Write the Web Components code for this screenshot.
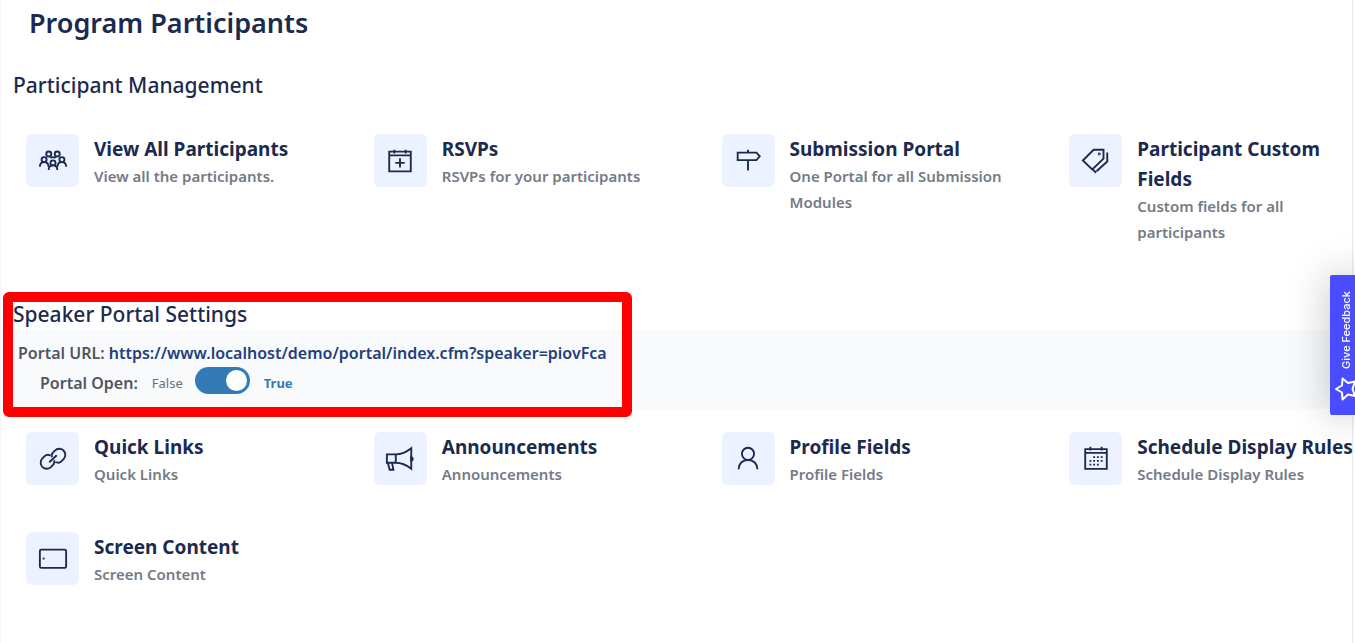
<!DOCTYPE html>
<html lang="en">
<head>
<meta charset="utf-8">
<meta name="viewport" content="width=device-width, initial-scale=1">
<title>Program Participants</title>
<style>
    :root {
        --ink: #1b2a4e;
        --muted: #747b86;
        --label: #50575f;
        --link: #22407a;
        --tile: #ecf2ff;
        --band: #f9fafc;
        --line: #e9ebf2;
        --blue: #337ab7;
    }

    body {
        margin: 0;
        background: #ffffff;
        color: var(--ink);
        font-family: "Noto Sans", "Open Sans", sans-serif;
        overflow-x: hidden;
    }
</style>
</head>
<body>
<program-page></program-page>

<script>
const ICONS = {
    group: `
        <circle cx="11.500" cy="8.500" r="2.700"/>
        <circle cx="20.500" cy="8.500" r="2.700"/>
        <circle cx="6.500" cy="14.500" r="2.700"/>
        <circle cx="25.500" cy="14.500" r="2.700"/>
        <circle cx="16" cy="18" r="2.700"/>
        <path d="M2 22c0-3 1.700-4.800 4.600-4.800S11.200 19 11.200 22M20.800 22c0-3 1.700-4.800 4.600-4.800S30 19 30 22M11.400 25.500c0-3 1.800-4.800 4.600-4.800s4.600 1.800 4.600 4.800M13.200 13c1.300-1.600 4.300-1.600 5.600 0"/>`,
    calendarPlus: `
        <path d="M4.500 6h23v21h-23zM4.500 10h23M10 4v4M22 4v4M16 13v10M11 18h10"/>`,
    signpost: `
        <path d="M5 7h20l3.500 4-3.500 4H5zM16 4v3M16 16v10"/>`,
    tags: `
        <path d="M2 15.500L13.500 4H24v9.500L12 25zM28 7v9.500L16.500 27M13 25.500l3 3"/>
        <circle cx="19.500" cy="8.500" r=".5"/>`,
    link: `
        <path d="M14.800 14.200c-.6-1.800-.2-3.600 1.200-5l2-2.200a6.500 6.500 0 0 1 9.300 9.100l-2.400 2.400c-1.600 1.500-4.200 1.700-6.100.7M17.200 17.300c.6 1.800.2 3.600-1.200 5l-2 2.200a6.500 6.500 0 0 1-9.300-9.100l2.400-2.400c1.600-1.500 4.200-1.700 6.100-.7M12 19.500l8-7.500"/>`,
    megaphone: `
        <path d="M2 11h9.500C18 11 23 8.500 28 4.500v22C23 22.500 18 20 11.500 20H2zM11.500 11v9M3 20l2 7.500h4L7.500 20"/>
        <path d="M28 14c2.200.5 2.200 3.500 0 4z" fill="currentColor"/>`,
    person: `
        <circle cx="16" cy="10.500" r="6.500"/>
        <path d="M6 27c0-6 4-10 10-10s10 4 10 10"/>`,
    calendarDays: `
        <path d="M4.500 5.500h23v21h-23zM4.500 9.500h23M10 3v4M22 3v4"/>
        <path stroke-dasharray="2 2" d="M13 14h12M9 18h15M9 22h12"/>`,
    tablet: `
        <rect x="2" y="6" width="28" height="19.500" rx="1.500"/>
        <path d="M5 15.500h2"/>`
};

class FeatureCard extends HTMLElement {
    connectedCallback() {
        this.attachShadow({ mode: 'open' });
        this.shadowRoot.innerHTML = `
            <style>
                :host {
                    display: block;
                    min-width: 0;
                }

                a {
                    display: flex;
                    align-items: flex-start;
                    gap: 15px;
                    color: inherit;
                    text-decoration: none;
                }

                .tile {
                    flex: none;
                    display: flex;
                    align-items: center;
                    justify-content: center;
                    width: 53px;
                    height: 53px;
                    border-radius: 6px;
                    background: var(--tile);
                }

                svg {
                    width: 30px;
                    height: 30px;
                    fill: none;
                    stroke: currentColor;
                    stroke-width: 2;
                }

                .title {
                    display: block;
                    font-size: 19px;
                    font-weight: 700;
                    line-height: 30px;
                }

                .description {
                    display: block;
                    margin-top: -1px;
                    color: var(--muted);
                    font-size: 15px;
                    font-weight: 600;
                    line-height: 26px;
                }
            </style>
            <a href="#">
                <span class="tile"><svg viewBox="0 0 32 32" aria-hidden="true">${ICONS[this.getAttribute('icon')]}</svg></span>
                <span>
                    <span class="title"><slot name="title"></slot></span>
                    <span class="description"><slot></slot></span>
                </span>
            </a>
        `;
    }
}

class CardGrid extends HTMLElement {
    connectedCallback() {
        this.attachShadow({ mode: 'open' });
        this.shadowRoot.innerHTML = `
            <style>
                :host {
                    display: grid;
                    grid-template-columns: repeat(4, minmax(0, 1fr));
                    gap: 45px 60px;
                    margin-right: -5px;
                    padding-left: 25px;
                }

                @media (max-width: 1100px) {
                    :host {
                        grid-template-columns: repeat(2, minmax(0, 1fr));
                    }
                }
            </style>
            <slot></slot>
        `;
    }
}

class ToggleSwitch extends HTMLElement {
    connectedCallback() {
        this.attachShadow({ mode: 'open' });
        this.shadowRoot.innerHTML = `
            <style>
                :host {
                    display: flex;
                    font-size: 13px;
                }

                label {
                    display: flex;
                    align-items: center;
                    gap: 12px;
                }

                .caption {
                    color: var(--label);
                    font-size: 16px;
                    font-weight: 600;
                    margin-right: 2px;
                }

                .off {
                    color: #6b7076;
                    font-weight: 400;
                }

                .on {
                    color: var(--blue);
                    font-weight: 700;
                    margin-left: 2px;
                }

                input {
                    appearance: none;
                    box-sizing: border-box;
                    width: 55px;
                    height: 27px;
                    margin: 0 0 4px;
                    padding: 3px;
                    border-radius: 14px;
                    background: #cccccc;
                    cursor: pointer;
                }

                input::before {
                    content: "";
                    display: block;
                    width: 21px;
                    height: 21px;
                    border-radius: 50%;
                    background: #ffffff;
                }

                input:checked {
                    background: var(--blue);
                }

                input:checked::before {
                    margin-left: auto;
                }
            </style>
            <label>
                <span class="caption"><slot></slot></span>
                <span class="off">False</span>
                <input type="checkbox" role="switch" checked>
                <span class="on">True</span>
            </label>
        `;
    }
}

class PortalSettings extends HTMLElement {
    connectedCallback() {
        this.attachShadow({ mode: 'open' });
        this.shadowRoot.innerHTML = `
            <style>
                :host {
                    display: block;
                    position: relative;
                }

                h2 {
                    margin: 0;
                    padding: 0 0 2px 12px;
                    font-size: 21px;
                    font-weight: 500;
                    line-height: 28px;
                }

                .band {
                    box-sizing: border-box;
                    min-height: 79px;
                    padding: 10px 17px;
                    background: var(--band);
                    color: var(--label);
                    font-size: 16px;
                    font-weight: 600;
                }

                .url {
                    line-height: 27px;
                }

                a {
                    color: var(--link);
                    text-decoration: none;
                }

                toggle-switch {
                    padding-left: 22px;
                }

                /* callout drawn over the heading and the settings */
                .callout {
                    position: absolute;
                    top: -8px;
                    bottom: -8px;
                    left: 2px;
                    width: 609px;
                    border: 10px solid #ff0000;
                    border-radius: 6px;
                    pointer-events: none;
                }
            </style>
            <h2>Speaker Portal Settings</h2>
            <div class="band">
                <div class="url">Portal URL: <a href="#">https://www.localhost/demo/portal/index.cfm?speaker=piovFca</a></div>
                <toggle-switch>Portal Open:</toggle-switch>
            </div>
            <div class="callout"></div>
        `;
    }
}

class FeedbackTab extends HTMLElement {
    connectedCallback() {
        this.attachShadow({ mode: 'open' });
        this.shadowRoot.innerHTML = `
            <style>
                :host {
                    position: fixed;
                    top: 275px;
                    right: -7px;
                }

                button {
                    display: flex;
                    flex-direction: column;
                    align-items: center;
                    justify-content: space-between;
                    width: 32px;
                    height: 140px;
                    padding: 16px 0 14px;
                    border: 0;
                    border-radius: 2px;
                    background: #4a4dff;
                    color: #ffffff;
                    font: 500 11px Inter, sans-serif;
                    box-shadow: 0 0 40px rgba(0, 0, 0, 0.25);
                    cursor: pointer;
                }

                span {
                    writing-mode: vertical-rl;
                    transform: rotate(180deg);
                }

                svg {
                    width: 24px;
                    height: 24px;
                    fill: none;
                    stroke: currentColor;
                    stroke-width: 2;
                    stroke-linejoin: round;
                }
            </style>
            <button type="button">
                <span>Give Feedback</span>
                <svg viewBox="0 0 24 24" aria-hidden="true"><path d="M2 12l6-3.500.5-7 5.500 4.500 7-1.500-2.500 7.500 2.500 7-7-1.500L8.500 22.500l-.5-7z"/></svg>
            </button>
        `;
    }
}

class ProgramPage extends HTMLElement {
    connectedCallback() {
        this.attachShadow({ mode: 'open' });
        this.shadowRoot.innerHTML = `
            <style>
                :host {
                    display: block;
                }

                main {
                    box-sizing: border-box;
                    min-height: 100vh;
                    margin-right: 2px;
                    border: solid var(--line);
                    border-width: 0 1px;
                    border-left-color: #f5f5f8;
                }

                h1 {
                    margin: 0;
                    padding: 5px 0 0 28px;
                    font-size: 27px;
                    font-weight: 600;
                    line-height: 36px;
                }

                h2 {
                    margin: 30px 0 35px;
                    padding-left: 12px;
                    font-size: 21px;
                    font-weight: 500;
                    line-height: 28px;
                }

                portal-settings {
                    margin: 55px 0 23px;
                }
            </style>
            <main>
                <h1>Program Participants</h1>
                <h2>Participant Management</h2>
                <card-grid>
                    <feature-card icon="group"><span slot="title">View All Participants</span>View all the participants.</feature-card>
                    <feature-card icon="calendarPlus"><span slot="title">RSVPs</span>RSVPs for your participants</feature-card>
                    <feature-card icon="signpost"><span slot="title">Submission Portal</span>One Portal for all Submission Modules</feature-card>
                    <feature-card icon="tags"><span slot="title">Participant Custom Fields</span>Custom fields for all participants</feature-card>
                </card-grid>
                <portal-settings></portal-settings>
                <card-grid>
                    <feature-card icon="link"><span slot="title">Quick Links</span>Quick Links</feature-card>
                    <feature-card icon="megaphone"><span slot="title">Announcements</span>Announcements</feature-card>
                    <feature-card icon="person"><span slot="title">Profile Fields</span>Profile Fields</feature-card>
                    <feature-card icon="calendarDays"><span slot="title">Schedule Display Rules</span>Schedule Display Rules</feature-card>
                    <feature-card icon="tablet"><span slot="title">Screen Content</span>Screen Content</feature-card>
                </card-grid>
            </main>
            <feedback-tab></feedback-tab>
        `;
    }
}

customElements.define('feature-card', FeatureCard);
customElements.define('card-grid', CardGrid);
customElements.define('toggle-switch', ToggleSwitch);
customElements.define('portal-settings', PortalSettings);
customElements.define('feedback-tab', FeedbackTab);
customElements.define('program-page', ProgramPage);
</script>
</body>
</html>
